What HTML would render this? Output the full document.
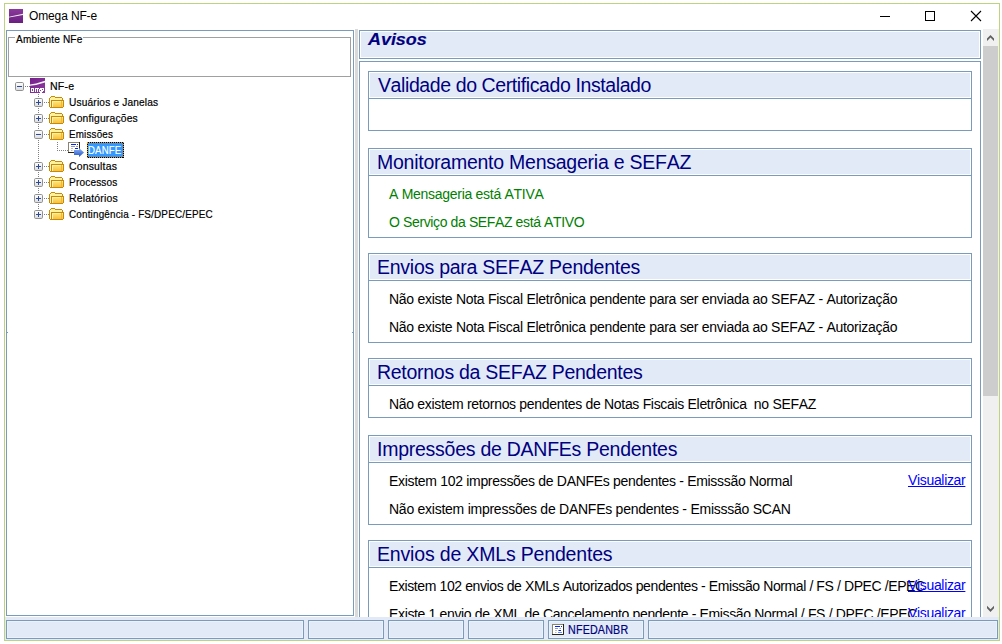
<!DOCTYPE html>
<html><head><meta charset="utf-8"><style>
html,body{margin:0;padding:0;}
body{width:1002px;height:644px;position:relative;overflow:hidden;background:#fff;font-family:"Liberation Sans", sans-serif;}
.r{position:absolute;box-sizing:border-box;}
.t{position:absolute;white-space:pre;line-height:1;font-kerning:none;}
</style></head><body>
<div class="r" style="left:4px;top:3px;width:996px;height:638px;border:1px solid #bcd480;"></div>
<svg class="r" style="left:9px;top:9px" width="14" height="14" viewBox="0 0 14 14"><defs><linearGradient id="pg" x1="0" y1="0" x2="0" y2="1"><stop offset="0" stop-color="#8a3a9a"/><stop offset="1" stop-color="#6a1f80"/></linearGradient></defs><rect width="14" height="14" fill="url(#pg)"/><path d="M0 7.7 L14 4.7 L14 6.0 L0 8.6Z" fill="#fff" opacity="0.9"/></svg>
<div class="t" style="left:29px;top:10px;font-size:12px;color:#000;letter-spacing:-0.133px;">Omega NF-e</div>
<div class="r" style="left:880px;top:16px;width:10px;height:1px;background:#000;"></div>
<div class="r" style="left:925px;top:11px;width:10px;height:10px;border:1px solid #000;"></div>
<svg class="r" style="left:970px;top:10px" width="13" height="13" viewBox="0 0 13 13"><path d="M1 1 L11 11 M11 1 L1 11" stroke="#000" stroke-width="1.1"/></svg>
<div class="r" style="left:6px;top:30px;width:348px;height:586px;background:#fff;border:1px solid #7a9bba;"></div>
<div class="r" style="left:8px;top:37px;width:343px;height:40px;border:1px solid #a0a0a0;"></div>
<div class="r" style="left:7px;top:332px;width:1px;height:1px;background:#7a9bba;"></div>
<div class="r" style="left:352px;top:332px;width:1px;height:1px;background:#7a9bba;"></div>
<div class="r" style="left:15px;top:34px;width:68px;height:8px;background:#fff"></div>
<div class="t" style="left:16px;top:34px;font-size:11px;color:#000;letter-spacing:0.2px;-webkit-text-stroke:0.2px #000;transform:scaleX(0.914);transform-origin:0 0;">Ambiente NFe</div>
<div class="r" style="left:355px;top:29px;width:3px;height:588px;background:#dadada;"></div>
<div class="r" style="left:359px;top:30px;width:622px;height:29px;background:#e3eaf7;border:1px solid #7a9bba;box-shadow:inset 0 0 0 1px #fff;"></div>
<div class="t" style="left:368px;top:31px;font-size:18px;font-weight:bold;font-style:italic;color:#000080;letter-spacing:-0.05px;transform:scaleY(0.91);transform-origin:0 0;-webkit-text-stroke:0.15px #000080">Avisos</div>
<div class="r" style="left:359px;top:61px;width:622px;height:557px;background:#fff;border:1px solid #7a9bba;border-bottom:0;"></div>
<div class="r" style="left:0;top:0;width:1002px;height:617px;overflow:hidden">
<div class="r" style="left:368px;top:71px;width:604px;height:60px;background:#fff;border:1px solid #7a9bba;"></div>
<div class="r" style="left:368px;top:71px;width:604px;height:28px;background:#e3eaf7;border:1px solid #7a9bba;box-shadow:inset 0 0 0 1px #fff;"></div>
<div class="t" style="left:378px;top:76px;font-size:19.5px;color:#000080;letter-spacing:-0.4px;">Validade do Certificado Instalado</div>
<div class="r" style="left:368px;top:148px;width:604px;height:90px;background:#fff;border:1px solid #7a9bba;"></div>
<div class="r" style="left:368px;top:148px;width:604px;height:28px;background:#e3eaf7;border:1px solid #7a9bba;box-shadow:inset 0 0 0 1px #fff;"></div>
<div class="t" style="left:377px;top:153px;font-size:19.5px;color:#000080;letter-spacing:-0.245px;">Monitoramento Mensageria e SEFAZ</div>
<div class="t" style="left:389px;top:187px;font-size:14px;color:#008000;letter-spacing:-0.282px;">A Mensageria está ATIVA</div>
<div class="t" style="left:389px;top:215px;font-size:14px;color:#008000;letter-spacing:-0.379px;">O Serviço da SEFAZ está ATIVO</div>
<div class="r" style="left:368px;top:253px;width:604px;height:90px;background:#fff;border:1px solid #7a9bba;"></div>
<div class="r" style="left:368px;top:253px;width:604px;height:28px;background:#e3eaf7;border:1px solid #7a9bba;box-shadow:inset 0 0 0 1px #fff;"></div>
<div class="t" style="left:377px;top:258px;font-size:19.5px;color:#000080;letter-spacing:-0.254px;">Envios para SEFAZ Pendentes</div>
<div class="t" style="left:389px;top:292px;font-size:14px;color:#000;letter-spacing:-0.284px;">Não existe Nota Fiscal Eletrônica pendente para ser enviada ao SEFAZ - Autorização</div>
<div class="t" style="left:389px;top:320px;font-size:14px;color:#000;letter-spacing:-0.284px;">Não existe Nota Fiscal Eletrônica pendente para ser enviada ao SEFAZ - Autorização</div>
<div class="r" style="left:368px;top:358px;width:604px;height:60px;background:#fff;border:1px solid #7a9bba;"></div>
<div class="r" style="left:368px;top:358px;width:604px;height:28px;background:#e3eaf7;border:1px solid #7a9bba;box-shadow:inset 0 0 0 1px #fff;"></div>
<div class="t" style="left:377px;top:363px;font-size:19.5px;color:#000080;letter-spacing:-0.285px;">Retornos da SEFAZ Pendentes</div>
<div class="t" style="left:389px;top:397px;font-size:14px;color:#000;letter-spacing:-0.313px;">Não existem retornos pendentes de Notas Fiscais Eletrônica&nbsp; no SEFAZ</div>
<div class="r" style="left:368px;top:435px;width:604px;height:90px;background:#fff;border:1px solid #7a9bba;"></div>
<div class="r" style="left:368px;top:435px;width:604px;height:28px;background:#e3eaf7;border:1px solid #7a9bba;box-shadow:inset 0 0 0 1px #fff;"></div>
<div class="t" style="left:377px;top:440px;font-size:19.5px;color:#000080;letter-spacing:-0.255px;">Impressões de DANFEs Pendentes</div>
<div class="t" style="left:389px;top:474px;font-size:14px;color:#000;letter-spacing:-0.308px;">Existem 102 impressões de DANFEs pendentes - Emisssão Normal</div>
<div class="t" style="left:908px;top:473px;font-size:14px;color:#0000ff;letter-spacing:-0.333px;text-decoration:underline;">Visualizar</div>
<div class="t" style="left:389px;top:502px;font-size:14px;color:#000;letter-spacing:-0.253px;">Não existem impressões de DANFEs pendentes - Emisssão SCAN</div>
<div class="r" style="left:368px;top:540px;width:604px;height:90px;background:#fff;border:1px solid #7a9bba;"></div>
<div class="r" style="left:368px;top:540px;width:604px;height:28px;background:#e3eaf7;border:1px solid #7a9bba;box-shadow:inset 0 0 0 1px #fff;"></div>
<div class="t" style="left:377px;top:545px;font-size:19.5px;color:#000080;letter-spacing:-0.174px;">Envios de XMLs Pendentes</div>
<div class="t" style="left:389px;top:579px;font-size:14px;color:#000;letter-spacing:-0.398px;">Existem 102 envios de XMLs Autorizados pendentes - Emissão Normal / FS / DPEC /EPEC</div>
<div class="t" style="left:908px;top:578px;font-size:14px;color:#0000ff;letter-spacing:-0.333px;text-decoration:underline;">Visualizar</div>
<div class="t" style="left:389px;top:607px;font-size:14px;color:#000;letter-spacing:-0.35px;">Existe 1 envio de XML de Cancelamento pendente - Emissão Normal / FS / DPEC /EPEC</div>
<div class="t" style="left:908px;top:606px;font-size:14px;color:#0000ff;letter-spacing:-0.333px;text-decoration:underline;">Visualizar</div>
</div>
<div class="r" style="left:983px;top:29px;width:16px;height:588px;background:#f0f0f0;"></div>
<div class="r" style="left:983px;top:46px;width:15px;height:350px;background:#cdcdcd;"></div>
<svg class="r" style="left:984px;top:31px" width="14" height="14" viewBox="0 0 14 14"><path d="M3 7.6 L6.5 3.9 L10 7.6 L10 10 L6.5 6.6 L3 10 Z" fill="#606060"/></svg>
<svg class="r" style="left:984px;top:602px" width="14" height="14" viewBox="0 0 14 14"><path d="M3 3.8 L6.5 7.2 L10 3.8 L10 6.2 L6.5 9.9 L3 6.2 Z" fill="#606060"/></svg>
<div class="r" style="left:5px;top:617px;width:994px;height:23px;background:#e3eaf7;"></div>
<div class="r" style="left:6px;top:620px;width:298px;height:19px;background:#e3eaf7;border:1px solid #7a9bba;box-shadow:inset 0 0 0 1px #edf1f9;"></div>
<div class="r" style="left:308px;top:620px;width:76px;height:19px;background:#e3eaf7;border:1px solid #7a9bba;box-shadow:inset 0 0 0 1px #edf1f9;"></div>
<div class="r" style="left:388px;top:620px;width:76px;height:19px;background:#e3eaf7;border:1px solid #7a9bba;box-shadow:inset 0 0 0 1px #edf1f9;"></div>
<div class="r" style="left:468px;top:620px;width:76px;height:19px;background:#e3eaf7;border:1px solid #7a9bba;box-shadow:inset 0 0 0 1px #edf1f9;"></div>
<div class="r" style="left:548px;top:620px;width:96px;height:19px;background:#e3eaf7;border:1px solid #7a9bba;box-shadow:inset 0 0 0 1px #edf1f9;"></div>
<div class="r" style="left:648px;top:620px;width:350px;height:19px;background:#e3eaf7;border:1px solid #7a9bba;box-shadow:inset 0 0 0 1px #edf1f9;"></div>
<svg class="r" style="left:552px;top:624px" width="12" height="11" viewBox="0 0 12 11"><rect x="0.5" y="0.5" width="11" height="10" fill="#fff" stroke="#8a8570"/><path d="M11.5 0 V10.5 H0" stroke="#2a2418" fill="none"/><path d="M3 2.5 H8 M9 2.5 H10" stroke="#0022ff"/><path d="M3 4.5 H6 M7.5 4.5 H9" stroke="#999"/><path d="M3 6.5 H5" stroke="#bbb"/><path d="M6.5 6.5 H9" stroke="#0022ff"/><path d="M3 8.5 H4.5" stroke="#bbb"/><path d="M6 8.5 H10" stroke="#6688ff"/></svg>
<div class="t" style="left:567.5px;top:624px;font-size:12px;color:#000080;letter-spacing:0.2px;-webkit-text-stroke:0.2px #000080;transform:scaleX(0.8926);transform-origin:0 0;">NFEDANBR</div>
<svg class="r" style="left:15px;top:82px" width="9" height="9" viewBox="0 0 9 9"><defs><linearGradient id="bg1582" x1="0" y1="0" x2="0" y2="1"><stop offset="0" stop-color="#ffffff"/><stop offset="1" stop-color="#dcdcdc"/></linearGradient></defs><rect x="0.5" y="0.5" width="8" height="8" rx="1.2" fill="url(#bg1582)" stroke="#919191"/><path d="M2 4.5 H7" stroke="#2c4a96"/></svg>
<div class="r" style="left:25px;top:86px;width:1px;height:1px;background:#808080;"></div>
<div class="r" style="left:27px;top:86px;width:1px;height:1px;background:#808080;"></div>
<div class="r" style="left:29px;top:86px;width:1px;height:1px;background:#808080;"></div>
<svg class="r" style="left:30px;top:78px" width="15" height="15" viewBox="0 0 15 15"><defs><linearGradient id="og" x1="0" y1="0" x2="1" y2="1"><stop offset="0" stop-color="#75208a"/><stop offset="1" stop-color="#8e3aa0"/></linearGradient></defs><rect width="15" height="15" fill="url(#og)"/><path d="M0 6.6 L6 5.6 L15 2.8 L15 4.4 L6 6.9 L0 7.8Z" fill="#fff" opacity="0.95"/><g fill="#fff" shape-rendering="crispEdges"><rect x="1" y="10" width="13" height="4"/></g><g fill="#8a38a0" shape-rendering="crispEdges"><rect x="2" y="11" width="1" height="2"/><rect x="4" y="10" width="1" height="4"/><rect x="6" y="11" width="1" height="3"/><rect x="8" y="11" width="1" height="3"/><rect x="10" y="12" width="1" height="1"/><rect x="9" y="10" width="1" height="1"/><rect x="12" y="11" width="1" height="1"/><rect x="13" y="13" width="1" height="1"/></g><rect x="10" y="14" width="2" height="1" fill="#fff"/></svg>
<div class="t" style="left:49.5px;top:81px;font-size:11px;color:#000;letter-spacing:0.2px;-webkit-text-stroke:0.2px #000;transform:scaleX(0.9609);transform-origin:0 0;">NF-e</div>
<div class="r" style="left:38px;top:94px;width:1px;height:1px;background:#808080;"></div>
<div class="r" style="left:38px;top:96px;width:1px;height:1px;background:#808080;"></div>
<div class="r" style="left:38px;top:98px;width:1px;height:1px;background:#808080;"></div>
<div class="r" style="left:38px;top:100px;width:1px;height:1px;background:#808080;"></div>
<div class="r" style="left:38px;top:102px;width:1px;height:1px;background:#808080;"></div>
<div class="r" style="left:38px;top:104px;width:1px;height:1px;background:#808080;"></div>
<div class="r" style="left:38px;top:106px;width:1px;height:1px;background:#808080;"></div>
<div class="r" style="left:38px;top:108px;width:1px;height:1px;background:#808080;"></div>
<div class="r" style="left:38px;top:110px;width:1px;height:1px;background:#808080;"></div>
<div class="r" style="left:38px;top:112px;width:1px;height:1px;background:#808080;"></div>
<div class="r" style="left:38px;top:114px;width:1px;height:1px;background:#808080;"></div>
<div class="r" style="left:38px;top:116px;width:1px;height:1px;background:#808080;"></div>
<div class="r" style="left:38px;top:118px;width:1px;height:1px;background:#808080;"></div>
<div class="r" style="left:38px;top:120px;width:1px;height:1px;background:#808080;"></div>
<div class="r" style="left:38px;top:122px;width:1px;height:1px;background:#808080;"></div>
<div class="r" style="left:38px;top:124px;width:1px;height:1px;background:#808080;"></div>
<div class="r" style="left:38px;top:126px;width:1px;height:1px;background:#808080;"></div>
<div class="r" style="left:38px;top:128px;width:1px;height:1px;background:#808080;"></div>
<div class="r" style="left:38px;top:130px;width:1px;height:1px;background:#808080;"></div>
<div class="r" style="left:38px;top:132px;width:1px;height:1px;background:#808080;"></div>
<div class="r" style="left:38px;top:134px;width:1px;height:1px;background:#808080;"></div>
<div class="r" style="left:38px;top:136px;width:1px;height:1px;background:#808080;"></div>
<div class="r" style="left:38px;top:138px;width:1px;height:1px;background:#808080;"></div>
<div class="r" style="left:38px;top:140px;width:1px;height:1px;background:#808080;"></div>
<div class="r" style="left:38px;top:142px;width:1px;height:1px;background:#808080;"></div>
<div class="r" style="left:38px;top:144px;width:1px;height:1px;background:#808080;"></div>
<div class="r" style="left:38px;top:146px;width:1px;height:1px;background:#808080;"></div>
<div class="r" style="left:38px;top:148px;width:1px;height:1px;background:#808080;"></div>
<div class="r" style="left:38px;top:150px;width:1px;height:1px;background:#808080;"></div>
<div class="r" style="left:38px;top:152px;width:1px;height:1px;background:#808080;"></div>
<div class="r" style="left:38px;top:154px;width:1px;height:1px;background:#808080;"></div>
<div class="r" style="left:38px;top:156px;width:1px;height:1px;background:#808080;"></div>
<div class="r" style="left:38px;top:158px;width:1px;height:1px;background:#808080;"></div>
<div class="r" style="left:38px;top:160px;width:1px;height:1px;background:#808080;"></div>
<div class="r" style="left:38px;top:162px;width:1px;height:1px;background:#808080;"></div>
<div class="r" style="left:38px;top:164px;width:1px;height:1px;background:#808080;"></div>
<div class="r" style="left:38px;top:166px;width:1px;height:1px;background:#808080;"></div>
<div class="r" style="left:38px;top:168px;width:1px;height:1px;background:#808080;"></div>
<div class="r" style="left:38px;top:170px;width:1px;height:1px;background:#808080;"></div>
<div class="r" style="left:38px;top:172px;width:1px;height:1px;background:#808080;"></div>
<div class="r" style="left:38px;top:174px;width:1px;height:1px;background:#808080;"></div>
<div class="r" style="left:38px;top:176px;width:1px;height:1px;background:#808080;"></div>
<div class="r" style="left:38px;top:178px;width:1px;height:1px;background:#808080;"></div>
<div class="r" style="left:38px;top:180px;width:1px;height:1px;background:#808080;"></div>
<div class="r" style="left:38px;top:182px;width:1px;height:1px;background:#808080;"></div>
<div class="r" style="left:38px;top:184px;width:1px;height:1px;background:#808080;"></div>
<div class="r" style="left:38px;top:186px;width:1px;height:1px;background:#808080;"></div>
<div class="r" style="left:38px;top:188px;width:1px;height:1px;background:#808080;"></div>
<div class="r" style="left:38px;top:190px;width:1px;height:1px;background:#808080;"></div>
<div class="r" style="left:38px;top:192px;width:1px;height:1px;background:#808080;"></div>
<div class="r" style="left:38px;top:194px;width:1px;height:1px;background:#808080;"></div>
<div class="r" style="left:38px;top:196px;width:1px;height:1px;background:#808080;"></div>
<div class="r" style="left:38px;top:198px;width:1px;height:1px;background:#808080;"></div>
<div class="r" style="left:38px;top:200px;width:1px;height:1px;background:#808080;"></div>
<div class="r" style="left:38px;top:202px;width:1px;height:1px;background:#808080;"></div>
<div class="r" style="left:38px;top:204px;width:1px;height:1px;background:#808080;"></div>
<div class="r" style="left:38px;top:206px;width:1px;height:1px;background:#808080;"></div>
<div class="r" style="left:38px;top:208px;width:1px;height:1px;background:#808080;"></div>
<div class="r" style="left:38px;top:210px;width:1px;height:1px;background:#808080;"></div>
<div class="r" style="left:38px;top:212px;width:1px;height:1px;background:#808080;"></div>
<div class="r" style="left:38px;top:214px;width:1px;height:1px;background:#808080;"></div>
<svg class="r" style="left:34px;top:98px" width="9" height="9" viewBox="0 0 9 9"><defs><linearGradient id="bg3498" x1="0" y1="0" x2="0" y2="1"><stop offset="0" stop-color="#ffffff"/><stop offset="1" stop-color="#dcdcdc"/></linearGradient></defs><rect x="0.5" y="0.5" width="8" height="8" rx="1.2" fill="url(#bg3498)" stroke="#919191"/><path d="M2 4.5 H7" stroke="#2c4a96"/><path d="M4.5 2 V7" stroke="#2c4a96"/></svg>
<div class="r" style="left:44px;top:102px;width:1px;height:1px;background:#808080;"></div>
<div class="r" style="left:46px;top:102px;width:1px;height:1px;background:#808080;"></div>
<div class="r" style="left:48px;top:102px;width:1px;height:1px;background:#808080;"></div>
<svg class="r" style="left:49px;top:96px" width="15" height="12" viewBox="0 0 15 12" shape-rendering="crispEdges"><defs><linearGradient id="fg" x1="0" y1="0" x2="0" y2="1"><stop offset="0" stop-color="#ffe67a"/><stop offset="1" stop-color="#f7c23e"/></linearGradient></defs><rect x="1" y="1" width="12" height="3" fill="#fff39a"/><rect x="1" y="2" width="1" height="9" fill="#fff7b8"/><rect x="3" y="5" width="11" height="6" fill="url(#fg)"/><rect x="3" y="5" width="1" height="6" fill="#fff3b0"/><rect x="3" y="5" width="11" height="1" fill="#fff0a0"/><rect x="12" y="5" width="1" height="6" fill="#f4b838"/><g fill="#c8890a"><rect x="2" y="0" width="4" height="1"/><rect x="1" y="1" width="1" height="1"/><rect x="6" y="1" width="7" height="1"/><rect x="0" y="2" width="1" height="9"/><rect x="13" y="2" width="1" height="2"/><rect x="2" y="4" width="13" height="1"/><rect x="2" y="5" width="1" height="6"/><rect x="14" y="5" width="1" height="6"/><rect x="1" y="11" width="13" height="1"/></g></svg>
<div class="t" style="left:69px;top:97px;font-size:11px;color:#000;letter-spacing:0.2px;-webkit-text-stroke:0.2px #000;transform:scaleX(0.9196);transform-origin:0 0;">Usuários e Janelas</div>
<svg class="r" style="left:34px;top:114px" width="9" height="9" viewBox="0 0 9 9"><defs><linearGradient id="bg34114" x1="0" y1="0" x2="0" y2="1"><stop offset="0" stop-color="#ffffff"/><stop offset="1" stop-color="#dcdcdc"/></linearGradient></defs><rect x="0.5" y="0.5" width="8" height="8" rx="1.2" fill="url(#bg34114)" stroke="#919191"/><path d="M2 4.5 H7" stroke="#2c4a96"/><path d="M4.5 2 V7" stroke="#2c4a96"/></svg>
<div class="r" style="left:44px;top:118px;width:1px;height:1px;background:#808080;"></div>
<div class="r" style="left:46px;top:118px;width:1px;height:1px;background:#808080;"></div>
<div class="r" style="left:48px;top:118px;width:1px;height:1px;background:#808080;"></div>
<svg class="r" style="left:49px;top:112px" width="15" height="12" viewBox="0 0 15 12" shape-rendering="crispEdges"><defs><linearGradient id="fg" x1="0" y1="0" x2="0" y2="1"><stop offset="0" stop-color="#ffe67a"/><stop offset="1" stop-color="#f7c23e"/></linearGradient></defs><rect x="1" y="1" width="12" height="3" fill="#fff39a"/><rect x="1" y="2" width="1" height="9" fill="#fff7b8"/><rect x="3" y="5" width="11" height="6" fill="url(#fg)"/><rect x="3" y="5" width="1" height="6" fill="#fff3b0"/><rect x="3" y="5" width="11" height="1" fill="#fff0a0"/><rect x="12" y="5" width="1" height="6" fill="#f4b838"/><g fill="#c8890a"><rect x="2" y="0" width="4" height="1"/><rect x="1" y="1" width="1" height="1"/><rect x="6" y="1" width="7" height="1"/><rect x="0" y="2" width="1" height="9"/><rect x="13" y="2" width="1" height="2"/><rect x="2" y="4" width="13" height="1"/><rect x="2" y="5" width="1" height="6"/><rect x="14" y="5" width="1" height="6"/><rect x="1" y="11" width="13" height="1"/></g></svg>
<div class="t" style="left:69px;top:113px;font-size:11px;color:#000;letter-spacing:0.2px;-webkit-text-stroke:0.2px #000;transform:scaleX(0.9371);transform-origin:0 0;">Configurações</div>
<svg class="r" style="left:34px;top:130px" width="9" height="9" viewBox="0 0 9 9"><defs><linearGradient id="bg34130" x1="0" y1="0" x2="0" y2="1"><stop offset="0" stop-color="#ffffff"/><stop offset="1" stop-color="#dcdcdc"/></linearGradient></defs><rect x="0.5" y="0.5" width="8" height="8" rx="1.2" fill="url(#bg34130)" stroke="#919191"/><path d="M2 4.5 H7" stroke="#2c4a96"/></svg>
<div class="r" style="left:44px;top:134px;width:1px;height:1px;background:#808080;"></div>
<div class="r" style="left:46px;top:134px;width:1px;height:1px;background:#808080;"></div>
<div class="r" style="left:48px;top:134px;width:1px;height:1px;background:#808080;"></div>
<svg class="r" style="left:49px;top:128px" width="15" height="12" viewBox="0 0 15 12" shape-rendering="crispEdges"><defs><linearGradient id="fg" x1="0" y1="0" x2="0" y2="1"><stop offset="0" stop-color="#ffe67a"/><stop offset="1" stop-color="#f7c23e"/></linearGradient></defs><rect x="1" y="1" width="12" height="3" fill="#fff39a"/><rect x="1" y="2" width="1" height="9" fill="#fff7b8"/><rect x="3" y="5" width="11" height="6" fill="url(#fg)"/><rect x="3" y="5" width="1" height="6" fill="#fff3b0"/><rect x="3" y="5" width="11" height="1" fill="#fff0a0"/><rect x="12" y="5" width="1" height="6" fill="#f4b838"/><g fill="#c8890a"><rect x="2" y="0" width="4" height="1"/><rect x="1" y="1" width="1" height="1"/><rect x="6" y="1" width="7" height="1"/><rect x="0" y="2" width="1" height="9"/><rect x="13" y="2" width="1" height="2"/><rect x="2" y="4" width="13" height="1"/><rect x="2" y="5" width="1" height="6"/><rect x="14" y="5" width="1" height="6"/><rect x="1" y="11" width="13" height="1"/></g></svg>
<div class="t" style="left:69px;top:129px;font-size:11px;color:#000;letter-spacing:0.2px;-webkit-text-stroke:0.2px #000;transform:scaleX(0.894);transform-origin:0 0;">Emissões</div>
<svg class="r" style="left:34px;top:162px" width="9" height="9" viewBox="0 0 9 9"><defs><linearGradient id="bg34162" x1="0" y1="0" x2="0" y2="1"><stop offset="0" stop-color="#ffffff"/><stop offset="1" stop-color="#dcdcdc"/></linearGradient></defs><rect x="0.5" y="0.5" width="8" height="8" rx="1.2" fill="url(#bg34162)" stroke="#919191"/><path d="M2 4.5 H7" stroke="#2c4a96"/><path d="M4.5 2 V7" stroke="#2c4a96"/></svg>
<div class="r" style="left:44px;top:166px;width:1px;height:1px;background:#808080;"></div>
<div class="r" style="left:46px;top:166px;width:1px;height:1px;background:#808080;"></div>
<div class="r" style="left:48px;top:166px;width:1px;height:1px;background:#808080;"></div>
<svg class="r" style="left:49px;top:160px" width="15" height="12" viewBox="0 0 15 12" shape-rendering="crispEdges"><defs><linearGradient id="fg" x1="0" y1="0" x2="0" y2="1"><stop offset="0" stop-color="#ffe67a"/><stop offset="1" stop-color="#f7c23e"/></linearGradient></defs><rect x="1" y="1" width="12" height="3" fill="#fff39a"/><rect x="1" y="2" width="1" height="9" fill="#fff7b8"/><rect x="3" y="5" width="11" height="6" fill="url(#fg)"/><rect x="3" y="5" width="1" height="6" fill="#fff3b0"/><rect x="3" y="5" width="11" height="1" fill="#fff0a0"/><rect x="12" y="5" width="1" height="6" fill="#f4b838"/><g fill="#c8890a"><rect x="2" y="0" width="4" height="1"/><rect x="1" y="1" width="1" height="1"/><rect x="6" y="1" width="7" height="1"/><rect x="0" y="2" width="1" height="9"/><rect x="13" y="2" width="1" height="2"/><rect x="2" y="4" width="13" height="1"/><rect x="2" y="5" width="1" height="6"/><rect x="14" y="5" width="1" height="6"/><rect x="1" y="11" width="13" height="1"/></g></svg>
<div class="t" style="left:69px;top:161px;font-size:11px;color:#000;letter-spacing:0.2px;-webkit-text-stroke:0.2px #000;transform:scaleX(0.948);transform-origin:0 0;">Consultas</div>
<svg class="r" style="left:34px;top:178px" width="9" height="9" viewBox="0 0 9 9"><defs><linearGradient id="bg34178" x1="0" y1="0" x2="0" y2="1"><stop offset="0" stop-color="#ffffff"/><stop offset="1" stop-color="#dcdcdc"/></linearGradient></defs><rect x="0.5" y="0.5" width="8" height="8" rx="1.2" fill="url(#bg34178)" stroke="#919191"/><path d="M2 4.5 H7" stroke="#2c4a96"/><path d="M4.5 2 V7" stroke="#2c4a96"/></svg>
<div class="r" style="left:44px;top:182px;width:1px;height:1px;background:#808080;"></div>
<div class="r" style="left:46px;top:182px;width:1px;height:1px;background:#808080;"></div>
<div class="r" style="left:48px;top:182px;width:1px;height:1px;background:#808080;"></div>
<svg class="r" style="left:49px;top:176px" width="15" height="12" viewBox="0 0 15 12" shape-rendering="crispEdges"><defs><linearGradient id="fg" x1="0" y1="0" x2="0" y2="1"><stop offset="0" stop-color="#ffe67a"/><stop offset="1" stop-color="#f7c23e"/></linearGradient></defs><rect x="1" y="1" width="12" height="3" fill="#fff39a"/><rect x="1" y="2" width="1" height="9" fill="#fff7b8"/><rect x="3" y="5" width="11" height="6" fill="url(#fg)"/><rect x="3" y="5" width="1" height="6" fill="#fff3b0"/><rect x="3" y="5" width="11" height="1" fill="#fff0a0"/><rect x="12" y="5" width="1" height="6" fill="#f4b838"/><g fill="#c8890a"><rect x="2" y="0" width="4" height="1"/><rect x="1" y="1" width="1" height="1"/><rect x="6" y="1" width="7" height="1"/><rect x="0" y="2" width="1" height="9"/><rect x="13" y="2" width="1" height="2"/><rect x="2" y="4" width="13" height="1"/><rect x="2" y="5" width="1" height="6"/><rect x="14" y="5" width="1" height="6"/><rect x="1" y="11" width="13" height="1"/></g></svg>
<div class="t" style="left:69px;top:177px;font-size:11px;color:#000;letter-spacing:0.2px;-webkit-text-stroke:0.2px #000;transform:scaleX(0.9132);transform-origin:0 0;">Processos</div>
<svg class="r" style="left:34px;top:194px" width="9" height="9" viewBox="0 0 9 9"><defs><linearGradient id="bg34194" x1="0" y1="0" x2="0" y2="1"><stop offset="0" stop-color="#ffffff"/><stop offset="1" stop-color="#dcdcdc"/></linearGradient></defs><rect x="0.5" y="0.5" width="8" height="8" rx="1.2" fill="url(#bg34194)" stroke="#919191"/><path d="M2 4.5 H7" stroke="#2c4a96"/><path d="M4.5 2 V7" stroke="#2c4a96"/></svg>
<div class="r" style="left:44px;top:198px;width:1px;height:1px;background:#808080;"></div>
<div class="r" style="left:46px;top:198px;width:1px;height:1px;background:#808080;"></div>
<div class="r" style="left:48px;top:198px;width:1px;height:1px;background:#808080;"></div>
<svg class="r" style="left:49px;top:192px" width="15" height="12" viewBox="0 0 15 12" shape-rendering="crispEdges"><defs><linearGradient id="fg" x1="0" y1="0" x2="0" y2="1"><stop offset="0" stop-color="#ffe67a"/><stop offset="1" stop-color="#f7c23e"/></linearGradient></defs><rect x="1" y="1" width="12" height="3" fill="#fff39a"/><rect x="1" y="2" width="1" height="9" fill="#fff7b8"/><rect x="3" y="5" width="11" height="6" fill="url(#fg)"/><rect x="3" y="5" width="1" height="6" fill="#fff3b0"/><rect x="3" y="5" width="11" height="1" fill="#fff0a0"/><rect x="12" y="5" width="1" height="6" fill="#f4b838"/><g fill="#c8890a"><rect x="2" y="0" width="4" height="1"/><rect x="1" y="1" width="1" height="1"/><rect x="6" y="1" width="7" height="1"/><rect x="0" y="2" width="1" height="9"/><rect x="13" y="2" width="1" height="2"/><rect x="2" y="4" width="13" height="1"/><rect x="2" y="5" width="1" height="6"/><rect x="14" y="5" width="1" height="6"/><rect x="1" y="11" width="13" height="1"/></g></svg>
<div class="t" style="left:69px;top:193px;font-size:11px;color:#000;letter-spacing:0.2px;-webkit-text-stroke:0.2px #000;transform:scaleX(0.949);transform-origin:0 0;">Relatórios</div>
<svg class="r" style="left:34px;top:210px" width="9" height="9" viewBox="0 0 9 9"><defs><linearGradient id="bg34210" x1="0" y1="0" x2="0" y2="1"><stop offset="0" stop-color="#ffffff"/><stop offset="1" stop-color="#dcdcdc"/></linearGradient></defs><rect x="0.5" y="0.5" width="8" height="8" rx="1.2" fill="url(#bg34210)" stroke="#919191"/><path d="M2 4.5 H7" stroke="#2c4a96"/><path d="M4.5 2 V7" stroke="#2c4a96"/></svg>
<div class="r" style="left:44px;top:214px;width:1px;height:1px;background:#808080;"></div>
<div class="r" style="left:46px;top:214px;width:1px;height:1px;background:#808080;"></div>
<div class="r" style="left:48px;top:214px;width:1px;height:1px;background:#808080;"></div>
<svg class="r" style="left:49px;top:208px" width="15" height="12" viewBox="0 0 15 12" shape-rendering="crispEdges"><defs><linearGradient id="fg" x1="0" y1="0" x2="0" y2="1"><stop offset="0" stop-color="#ffe67a"/><stop offset="1" stop-color="#f7c23e"/></linearGradient></defs><rect x="1" y="1" width="12" height="3" fill="#fff39a"/><rect x="1" y="2" width="1" height="9" fill="#fff7b8"/><rect x="3" y="5" width="11" height="6" fill="url(#fg)"/><rect x="3" y="5" width="1" height="6" fill="#fff3b0"/><rect x="3" y="5" width="11" height="1" fill="#fff0a0"/><rect x="12" y="5" width="1" height="6" fill="#f4b838"/><g fill="#c8890a"><rect x="2" y="0" width="4" height="1"/><rect x="1" y="1" width="1" height="1"/><rect x="6" y="1" width="7" height="1"/><rect x="0" y="2" width="1" height="9"/><rect x="13" y="2" width="1" height="2"/><rect x="2" y="4" width="13" height="1"/><rect x="2" y="5" width="1" height="6"/><rect x="14" y="5" width="1" height="6"/><rect x="1" y="11" width="13" height="1"/></g></svg>
<div class="t" style="left:69px;top:209px;font-size:11px;color:#000;letter-spacing:0.2px;-webkit-text-stroke:0.2px #000;transform:scaleX(0.8981);transform-origin:0 0;">Contingência - FS/DPEC/EPEC</div>
<div class="r" style="left:57px;top:142px;width:1px;height:1px;background:#808080;"></div>
<div class="r" style="left:57px;top:144px;width:1px;height:1px;background:#808080;"></div>
<div class="r" style="left:57px;top:146px;width:1px;height:1px;background:#808080;"></div>
<div class="r" style="left:57px;top:148px;width:1px;height:1px;background:#808080;"></div>
<div class="r" style="left:57px;top:150px;width:1px;height:1px;background:#808080;"></div>
<div class="r" style="left:59px;top:150px;width:1px;height:1px;background:#808080;"></div>
<div class="r" style="left:61px;top:150px;width:1px;height:1px;background:#808080;"></div>
<div class="r" style="left:63px;top:150px;width:1px;height:1px;background:#808080;"></div>
<div class="r" style="left:65px;top:150px;width:1px;height:1px;background:#808080;"></div>
<div class="r" style="left:67px;top:150px;width:1px;height:1px;background:#808080;"></div>
<svg class="r" style="left:68px;top:142px" width="17" height="16" viewBox="0 0 17 16"><rect x="0.5" y="0.5" width="11" height="10" fill="#fff" stroke="#8a8570"/><path d="M11.5 0 V10.5 H0" stroke="#2a2418" fill="none"/><path d="M3 2.5 H8 M9 2.5 H10" stroke="#0022ff"/><path d="M3 4.5 H7 M8 4.5 H10" stroke="#999"/><path d="M3 6.5 H5" stroke="#bbb"/><path d="M7 6.5 H10" stroke="#0022ff"/><path d="M3 8.5 H4.5" stroke="#bbb"/><defs><linearGradient id="ag" x1="0" y1="0" x2="0" y2="1"><stop offset="0" stop-color="#8fb8f8"/><stop offset="1" stop-color="#2050c0"/></linearGradient></defs><path d="M6 8 H11 V6 L16 10.5 L11 15 V13 H6 Z" fill="url(#ag)"/></svg>
<svg class="r" style="left:87px;top:142px" width="37" height="16" viewBox="0 0 37 16"><rect x="0" y="0" width="37" height="16" fill="#3399ff"/><rect x="0.5" y="0.5" width="36" height="15" fill="none" stroke="#f39010" shape-rendering="crispEdges"/><rect x="0.5" y="0.5" width="36" height="15" fill="none" stroke="#000" stroke-dasharray="1 1" shape-rendering="crispEdges"/></svg>
<div class="t" style="left:88px;top:145px;font-size:11px;color:#fff;letter-spacing:0.2px;-webkit-text-stroke:0.15px #fff;transform:scaleX(0.8739);transform-origin:0 0;">DANFE</div>
</body></html>
